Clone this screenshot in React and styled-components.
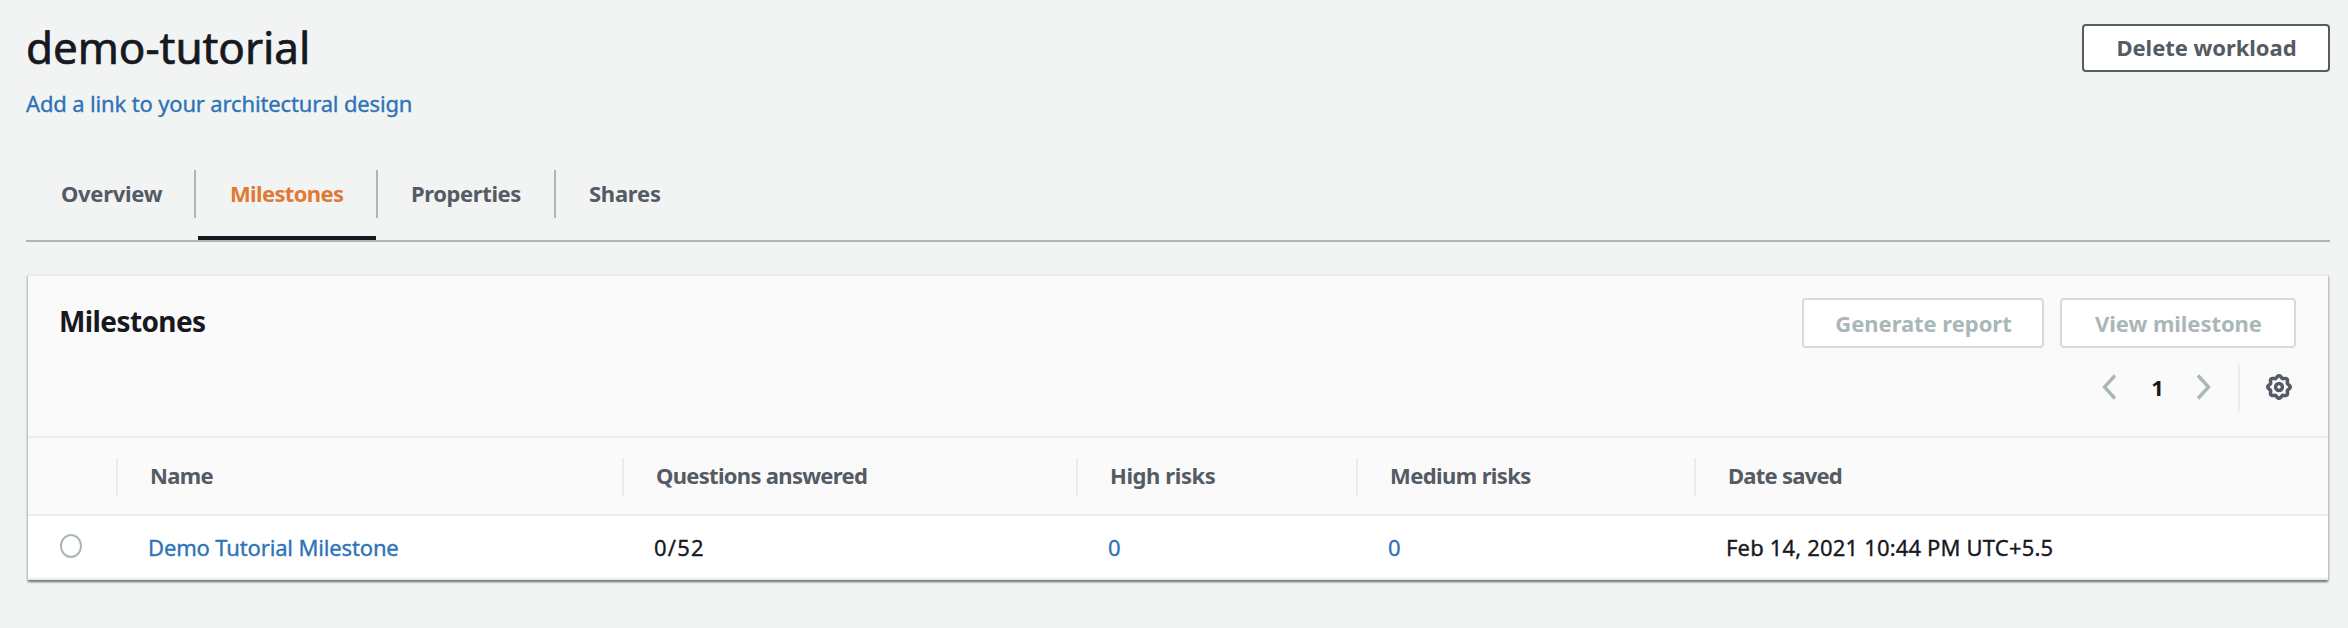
import React from "react";
import styled, { createGlobalStyle } from "styled-components";

const color = {
  page: "#f2f4f3",
  ink: "#16191f",
  muted: "#545b64",
  disabled: "#aab7b8",
  disabledBorder: "#d5dbdb",
  divider: "#eaeded",
  link: "#2e73b8",
  accent: "#e07a32",
  headerBg: "#fafafa",
};

const GlobalStyle = createGlobalStyle`
  *, *::before, *::after { box-sizing: border-box; }
  body {
    margin: 0;
    min-height: 100vh;
    background: ${color.page};
    color: ${color.ink};
    font: 400 22px/30px "Noto Sans", "Open Sans", sans-serif;
  }
`;

const Page = styled.main`
  padding: 17px 18px 0 26px;
`;

const PageHeader = styled.header`
  display: flex;
  justify-content: space-between;
  align-items: flex-start;
  height: 153px;
`;

const Title = styled.h1`
  margin: 0 0 11px;
  font-size: 44px;
  font-weight: 400;
  line-height: 60px;
  letter-spacing: -0.05px;
  -webkit-text-stroke: 0.7px currentColor;
`;

const Link = styled.a`
  color: ${color.link};
  text-decoration: none;
  letter-spacing: ${(p) => p.$tracking ?? 0}px;
  -webkit-text-stroke: 0.35px currentColor;
`;

const Button = styled.button`
  display: flex;
  align-items: center;
  justify-content: center;
  width: ${(p) => p.$width}px;
  height: ${(p) => (p.disabled ? 50 : 48)}px;
  padding: 0 0 ${(p) => (p.disabled ? 0 : 2)}px 1px;
  border: 2px solid ${(p) => (p.disabled ? color.disabledBorder : color.muted)};
  border-radius: 4px;
  background: #fff;
  color: ${(p) => (p.disabled ? color.disabled : color.muted)};
  font: inherit;
  font-weight: 700;
  letter-spacing: -0.05px;
`;

const DeleteButton = styled(Button)`
  margin-top: 7px;
`;

const TabList = styled.nav`
  display: flex;
  height: 72px;
  margin-bottom: 32px;
  border-bottom: 2px solid ${color.disabled};
`;

const Tab = styled.div`
  display: flex;
  flex-direction: column;
  width: ${(p) => p.$width}px;
  color: ${(p) => (p.$active ? color.accent : color.muted)};
`;

const TabLabel = styled.span`
  height: 48px;
  padding-left: ${(p) => p.$indent}px;
  border-right: ${(p) => (p.$last ? "none" : `2px solid ${color.disabled}`)};
  font-weight: 700;
  line-height: 46px;
  letter-spacing: ${(p) => p.$tracking}px;
`;

const TabIndicator = styled.span`
  height: 4px;
  margin: 18px 2px 0;
  background: ${color.ink};
`;

const Card = styled.section`
  margin: 0 2px;
  border-top: 2px solid ${color.divider};
  background: #fff;
  box-shadow:
    0 2px 2px 0 rgba(0, 28, 36, 0.3),
    1px 2px 2px 0 rgba(0, 28, 36, 0.2),
    -1px 2px 2px 0 rgba(0, 28, 36, 0.2);
`;

const CardHeader = styled.div`
  display: flex;
  justify-content: space-between;
  height: 162px;
  padding: 22px 32px 0 31px;
  border-bottom: 2px solid ${color.divider};
  background: ${color.headerBg};
`;

const CardTitle = styled.h2`
  margin: 3px 0 0;
  font-size: 28px;
  font-weight: 700;
  line-height: 40px;
  letter-spacing: -0.6px;
`;

const Controls = styled.div`
  display: flex;
  flex-direction: column;
  align-items: flex-end;
  gap: 16px;
`;

const ButtonRow = styled.div`
  display: flex;
  gap: 16px;
`;

const Pager = styled.div`
  display: flex;
  align-items: center;
  height: 48px;
`;

const PageNumber = styled.span`
  width: 81px;
  height: 48px;
  padding-left: 2px;
  text-align: center;
  font-weight: 700;
  line-height: 46px;
`;

const PagerIcon = styled.svg`
  display: block;
  margin-bottom: 2px;
  fill: none;
  stroke: ${color.disabled};
  stroke-width: 3.4;
`;

const PagerDivider = styled.span`
  width: 2px;
  height: 48px;
  margin: 0 26px 0 27px;
  background: ${color.divider};
`;

const SettingsIcon = styled.svg`
  display: block;
  margin: 0 4px 2px 0;
  fill: none;
  stroke: ${color.muted};
  stroke-width: 3.5;
`;

const Row = styled.div`
  display: grid;
  grid-template-columns: 90px 506px 454px 280px 338px 1fr;
  border-bottom: 2px solid ${color.divider};
`;

const HeadRow = styled(Row)`
  height: 78px;
  padding-top: 20px;
  background: ${color.headerBg};
`;

const BodyRow = styled(Row)`
  height: 64px;
`;

const HeadCell = styled.div`
  height: 38px;
  padding-left: 32px;
  border-right: ${(p) => (p.$last ? "none" : `2px solid ${color.divider}`)};
  color: ${color.muted};
  font-weight: 700;
  line-height: 34px;
  letter-spacing: ${(p) => p.$tracking ?? 0}px;
`;

const Cell = styled.div`
  padding-left: 30px;
  line-height: 62px;
  letter-spacing: ${(p) => p.$tracking ?? 0}px;
  -webkit-text-stroke: 0.35px currentColor;
`;

const RadioCell = styled.div`
  padding: 18px 0 0 32px;
`;

const Radio = styled.span`
  display: block;
  width: 22px;
  height: 24px;
  border: 2px solid ${color.disabled};
  border-radius: 50%;
  background: #fff;
`;

const tabs = [
  { label: "Overview", width: 170, indent: 35, tracking: -0.3 },
  { label: "Milestones", width: 182, indent: 34, tracking: -0.65 },
  { label: "Properties", width: 178, indent: 33, tracking: -0.4 },
  { label: "Shares", width: 140, indent: 33, tracking: -0.25 },
];

const activeTab = "Milestones";

const columns = [
  { label: "Name", tracking: -0.7 },
  { label: "Questions answered", tracking: -0.7 },
  { label: "High risks", tracking: -0.4 },
  { label: "Medium risks", tracking: -0.6 },
  { label: "Date saved", tracking: -0.75 },
];

// Eight rounded teeth as one closed outline around the origin.
const gearOutline =
  "M" +
  Array.from({ length: 96 }, (_, i) => {
    const a = (i / 96) * Math.PI * 2;
    const r = 10.2 + 1.05 * Math.cos(8 * a);
    return `${(r * Math.cos(a)).toFixed(2)} ${(r * Math.sin(a)).toFixed(2)}`;
  }).join("L") +
  "Z";

export default function App() {
  return (
    <>
      <GlobalStyle />
      <Page>
        <PageHeader>
          <div>
            <Title>demo-tutorial</Title>
            <Link $tracking={-0.15}>Add a link to your architectural design</Link>
          </div>
          <DeleteButton $width={248}>Delete workload</DeleteButton>
        </PageHeader>

        <TabList>
          {tabs.map((t, i) => (
            <Tab key={t.label} $width={t.width} $active={t.label === activeTab}>
              <TabLabel
                $indent={t.indent}
                $tracking={t.tracking}
                $last={i === tabs.length - 1}
              >
                {t.label}
              </TabLabel>
              {t.label === activeTab && <TabIndicator />}
            </Tab>
          ))}
        </TabList>

        <Card>
          <CardHeader>
            <CardTitle>Milestones</CardTitle>
            <Controls>
              <ButtonRow>
                <Button disabled $width={242}>Generate report</Button>
                <Button disabled $width={236}>View milestone</Button>
              </ButtonRow>
              <Pager>
                <PagerIcon width="14" height="26" viewBox="0 0 14 26">
                  <path d="M13 1.5 2.5 13 13 24.5" />
                </PagerIcon>
                <PageNumber>1</PageNumber>
                <PagerIcon width="14" height="26" viewBox="0 0 14 26">
                  <path d="M1 1.5 11.5 13 1 24.5" />
                </PagerIcon>
                <PagerDivider />
                <SettingsIcon width="26" height="26" viewBox="-13 -13 26 26">
                  <path d={gearOutline} />
                  <circle r="3.4" />
                </SettingsIcon>
              </Pager>
            </Controls>
          </CardHeader>

          <HeadRow>
            <HeadCell />
            {columns.map((c, i) => (
              <HeadCell
                key={c.label}
                $tracking={c.tracking}
                $last={i === columns.length - 1}
              >
                {c.label}
              </HeadCell>
            ))}
          </HeadRow>
          <BodyRow>
            <RadioCell>
              <Radio />
            </RadioCell>
            <Cell>
              <Link $tracking={-0.15}>Demo Tutorial Milestone</Link>
            </Cell>
            <Cell $tracking={1.2}>0/52</Cell>
            <Cell>
              <Link>0</Link>
            </Cell>
            <Cell>
              <Link>0</Link>
            </Cell>
            <Cell $tracking={0.17}>Feb 14, 2021 10:44 PM UTC+5.5</Cell>
          </BodyRow>
        </Card>
      </Page>
    </>
  );
}
